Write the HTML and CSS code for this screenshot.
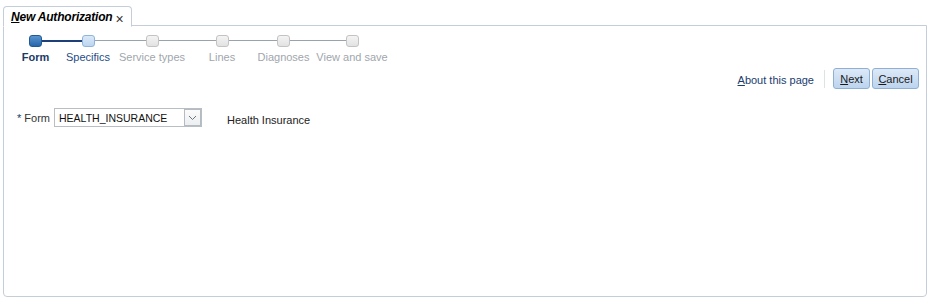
FILE: index.html
```html
<!DOCTYPE html>
<html>
<head>
<meta charset="utf-8">
<link rel="stylesheet" href="styles.css">
</head>
<body>
<div class="tabstrip">
  <div class="tab"><span class="tab-title"><u>N</u>ew Authorization</span><span class="tab-close">×</span></div>
</div>
<div class="panel">
  <div class="train">
    <div class="step s1 done"><div class="dotrow"><span class="ln none"></span><span class="dot cur"></span><span class="ln dark"></span></div><span class="lbl cur">Form</span></div>
    <div class="step s2"><div class="dotrow"><span class="ln dark"></span><span class="dot vis"></span><span class="ln"></span></div><span class="lbl vis">Specifics</span></div>
    <div class="step s3"><div class="dotrow"><span class="ln"></span><span class="dot"></span><span class="ln"></span></div><span class="lbl">Service types</span></div>
    <div class="step s4"><div class="dotrow"><span class="ln"></span><span class="dot"></span><span class="ln"></span></div><span class="lbl">Lines</span></div>
    <div class="step s5"><div class="dotrow"><span class="ln"></span><span class="dot"></span><span class="ln"></span></div><span class="lbl">Diagnoses</span></div>
    <div class="step s6"><div class="dotrow"><span class="ln"></span><span class="dot"></span><span class="ln none"></span></div><span class="lbl">View and save</span></div>
  </div>
  <div class="actions">
    <a class="about"><u>A</u>bout this page</a>
    <span class="sep"></span>
    <button class="btn next"><u>N</u>ext</button>
    <button class="btn cancel"><u>C</u>ancel</button>
  </div>
  <div class="formrow">
    <label class="flabel"><span class="req">*</span> Form</label>
    <div class="select">
      <span class="sel-text">HEALTH_INSURANCE</span>
      <span class="sel-btn"><svg width="9" height="6" viewBox="0 0 9 6"><path d="M1 1 L4.5 4.5 L8 1" fill="none" stroke="#6b7580" stroke-width="1"/></svg></span>
    </div>
    <span class="desc">Health Insurance</span>
  </div>
</div>
</body>
</html>
```
FILE: styles.css
```css
html, body {
  margin: 0;
  padding: 0;
  background: #fff;
  font-family: "Liberation Sans", Arial, sans-serif;
  font-size: 11px;
  color: #333;
}
.tabstrip {
  display: flex;
  padding: 6px 0 0 3px;
  height: 19px;
}
.tab {
  position: relative;
  z-index: 2;
  display: flex;
  align-items: center;
  white-space: nowrap;
  height: 19px;
  padding: 0 7px 0 7px;
  border: 1px solid #c4ced8;
  border-bottom: 1px solid #fff;
  border-radius: 4px 4px 0 0;
  background: #fff;
}
.tab-title {
  font-weight: bold;
  font-style: italic;
  font-size: 12px;
  letter-spacing: -0.2px;
  color: #000;
  margin-top: 1px;
}
.tab-close {
  font-size: 14px;
  line-height: 14px;
  color: #333;
  margin-left: 3px;
  margin-top: 5px;
}
.panel {
  margin: 0 3px;
  height: 270px;
  border: 1px solid #c4ced8;
  border-radius: 0 0 4px 4px;
  background: #fff;
  display: flex;
  flex-direction: column;
}
.train {
  display: flex;
  padding: 8px 0 0 9px;
}
.step {
  display: flex;
  flex-direction: column;
  align-items: center;
}
.s1 { width: 45px; }
.s2 { width: 60px; }
.s3 { width: 68px; }
.s4 { width: 72px; }
.s5 { width: 51px; }
.s6 { width: 86px; }
.dotrow {
  display: flex;
  align-items: center;
  width: 100%;
  height: 13px;
}
.ln {
  flex: 1;
  height: 1px;
  background: #98a3ad;
}
.ln.dark { background: #1d3f7c; height: 2px; }
.ln.none { background: transparent; }
.dot {
  width: 11px;
  height: 10px;
  border: 1px solid #c3c3c3;
  border-radius: 3px;
  background: linear-gradient(#f4f4f4, #e2e2e2);
  flex: none;
}
.dot.cur {
  border-color: #1f5a94;
  background: linear-gradient(#5a95d0, #2566aa);
}
.dot.vis {
  border-color: #8db4dc;
  background: linear-gradient(#dbe9f8, #bcd5f0);
}
.lbl {
  margin-top: 4px;
  white-space: nowrap;
  color: #a0a6ad;
  font-size: 11px;
}
.lbl.cur { color: #1b3a66; font-weight: bold; }
.lbl.vis { color: #1f4c87; }
.actions {
  display: flex;
  justify-content: flex-end;
  align-items: center;
  padding: 5px 7px 0 0;
}
.about {
  color: #1a3c6e;
  margin-right: 10px;
  margin-top: 3px;
}
.sep {
  width: 1px;
  height: 18px;
  background: #dde2e7;
  margin-right: 8px;
}
.btn {
  font-family: "Liberation Sans", Arial, sans-serif;
  font-size: 11px;
  color: #1a1a1a;
  height: 21px;
  padding: 0;
  border: 1px solid #8fb0d3;
  border-radius: 3px;
  background: linear-gradient(#dde9f7, #bcd4ee);
}
.next { width: 37px; }
.cancel { width: 47px; margin-left: 2px; }
.formrow {
  display: flex;
  align-items: center;
  padding: 19px 0 0 13px;
}
.flabel {
  color: #333;
  margin-right: 4px;
}
.req { color: #1a3c6e; }
.select {
  display: flex;
  align-items: center;
  width: 146px;
  height: 17px;
  border: 1px solid #b9bec4;
  background: #fff;
}
.sel-text {
  flex: 1;
  padding-left: 4px;
  color: #111;
  font-size: 10.5px;
}
.sel-btn {
  display: flex;
  align-items: center;
  justify-content: center;
  width: 15px;
  height: 15px;
  border: 1px solid #b5bbc2;
  background: linear-gradient(#fbfbfb, #eceef0);
}
.desc {
  margin-left: 25px;
  margin-top: 4px;
  color: #222;
  font-size: 11px;
}
```
